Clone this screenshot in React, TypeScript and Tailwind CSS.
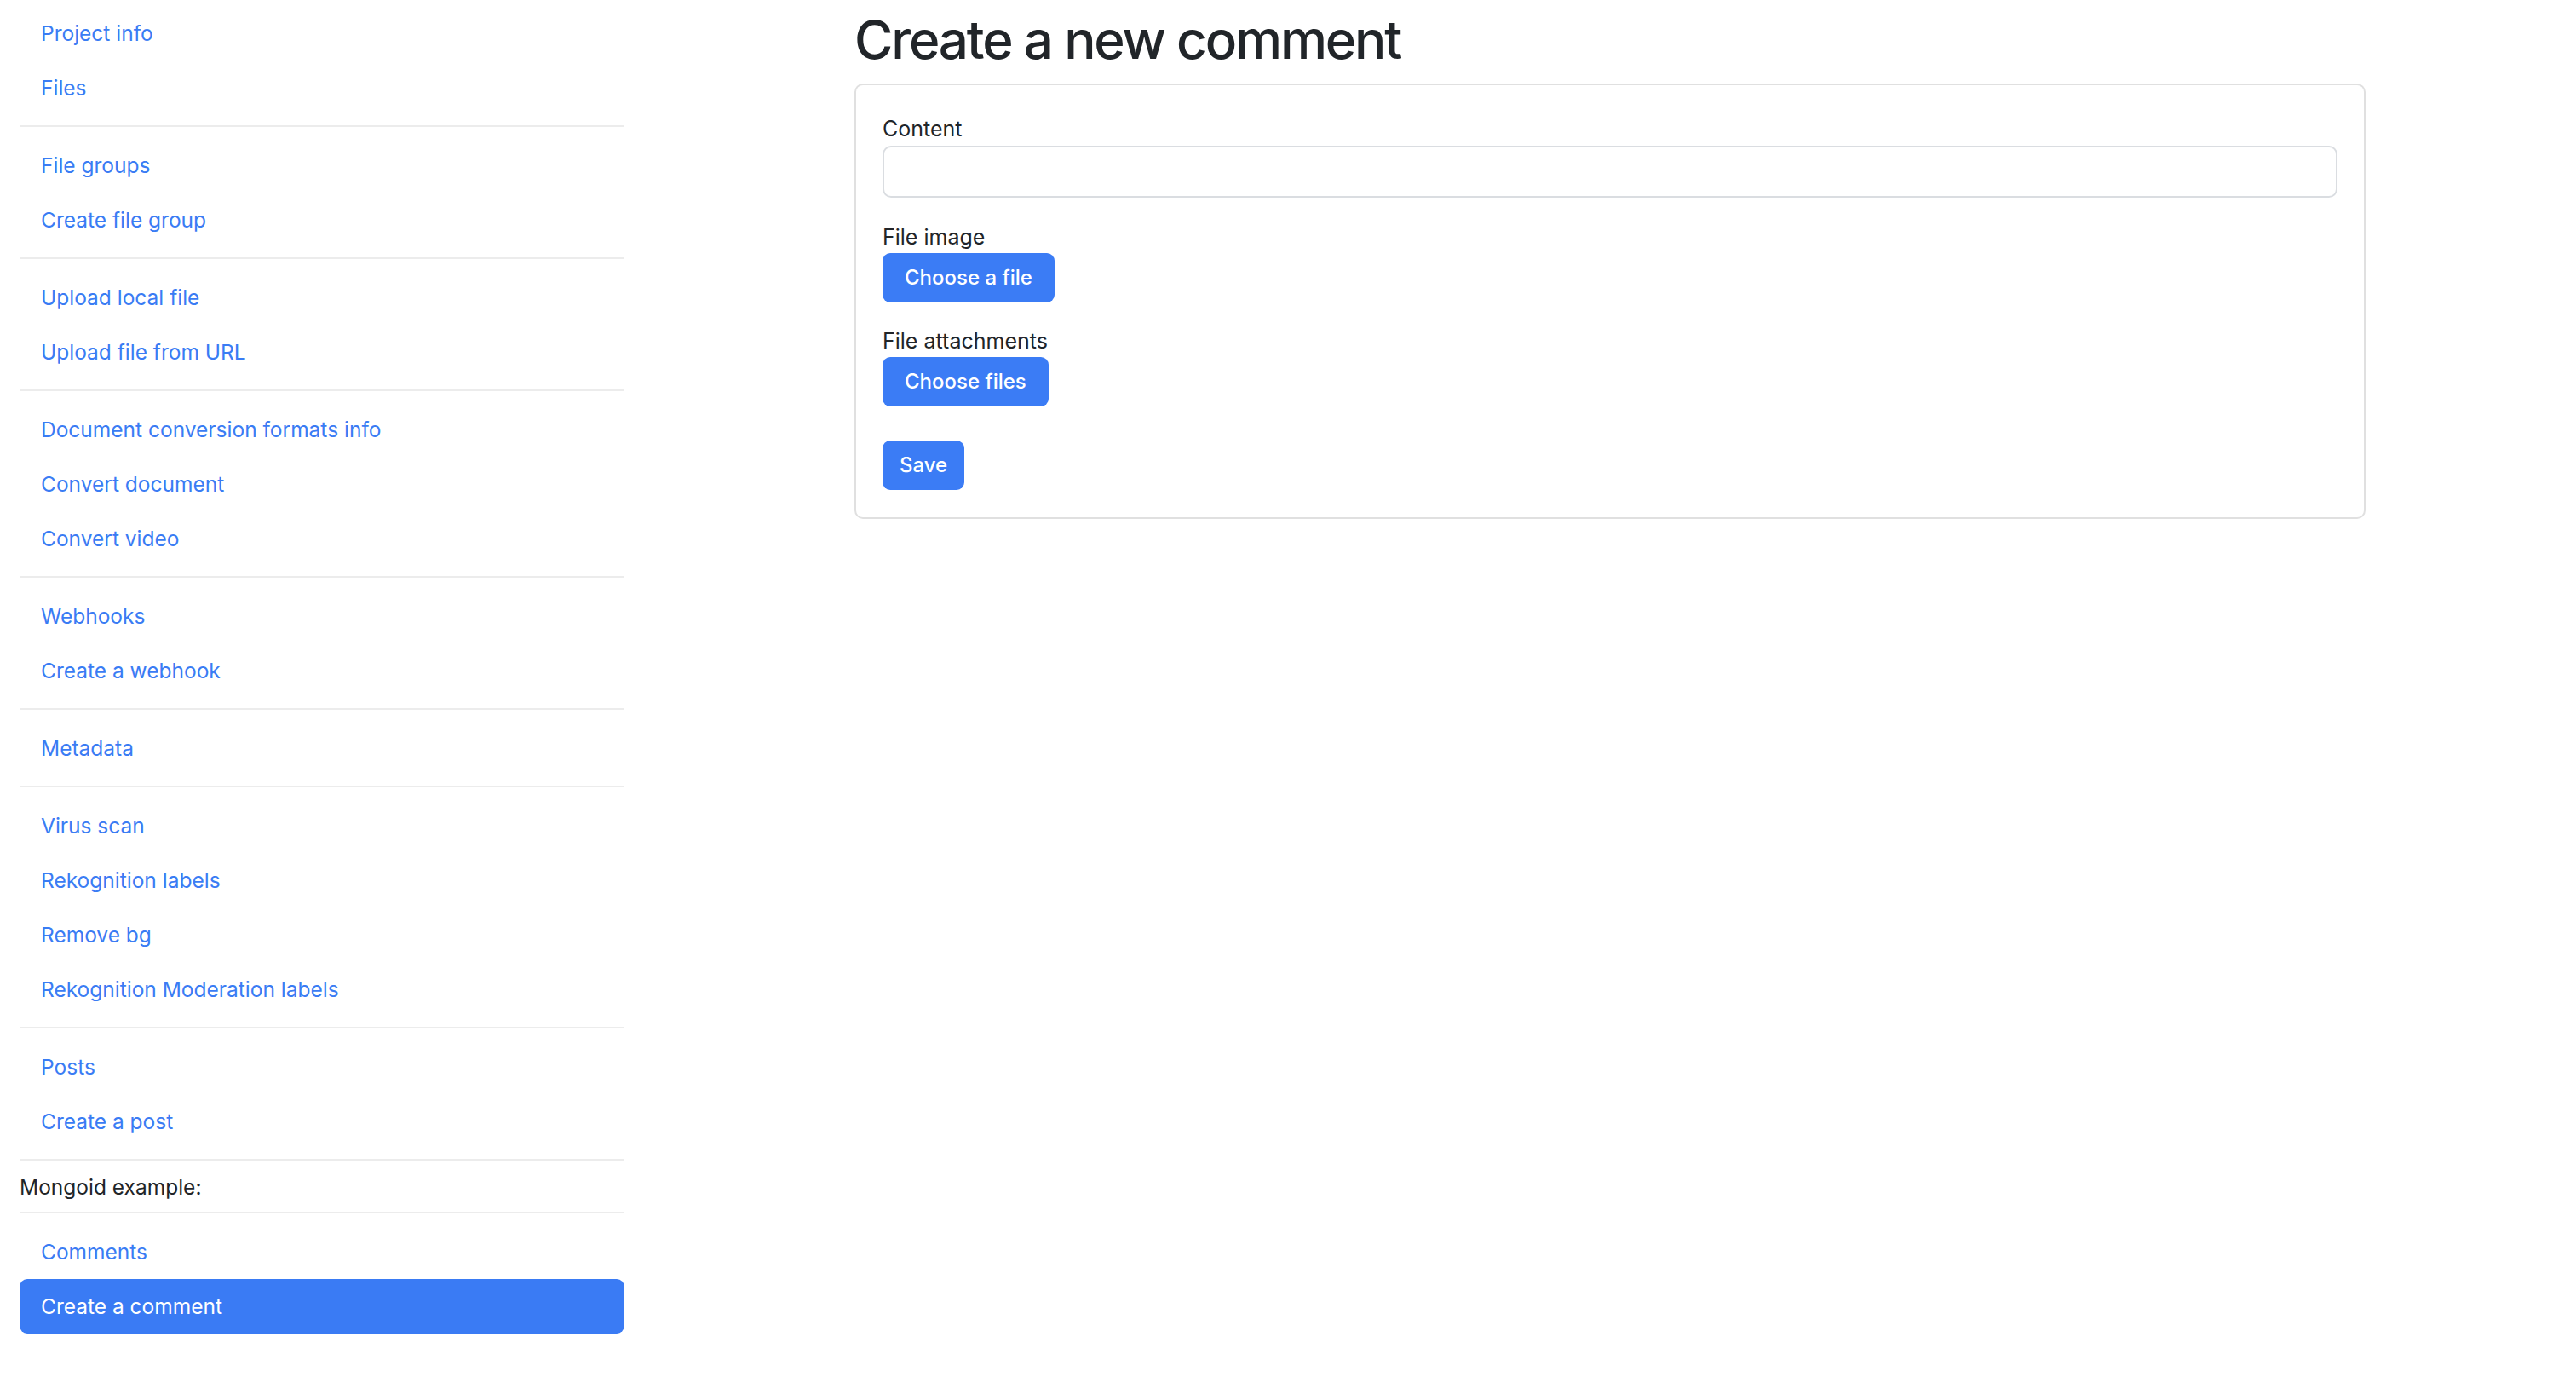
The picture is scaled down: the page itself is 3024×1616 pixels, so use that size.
const sections: (string[] | 'mongoid')[] = [
  ['Project info', 'Files'],
  ['File groups', 'Create file group'],
  ['Upload local file', 'Upload file from URL'],
  ['Document conversion formats info', 'Convert document', 'Convert video'],
  ['Webhooks', 'Create a webhook'],
  ['Metadata'],
  ['Virus scan', 'Rekognition labels', 'Remove bg', 'Rekognition Moderation labels'],
  ['Posts', 'Create a post'],
  'mongoid',
  ['Comments', 'Create a comment'],
]

const ACTIVE = 'Create a comment'

function Divider() {
  return <div className="mt-[12px] mb-[13px] h-[2px] bg-[#ececec]" />
}

function NavLink({ label }: { label: string }) {
  const active = label === ACTIVE
  return (
    <a
      href="#"
      className={
        active
          ? 'flex h-[64px] items-center rounded-[9px] bg-[#3a7bf4] pl-[25px] text-white'
          : 'flex h-[64px] items-center pl-[25px] text-[#3a7cf4]'
      }
    >
      {label}
    </a>
  )
}

function Sidebar() {
  return (
    <nav className="w-[733px] shrink-0 pl-[23px] pt-[7px] text-[24.5px] leading-[36px]">
      {sections.map((section, i) => (
        <div key={i}>
          {i > 0 && <Divider />}
          {section === 'mongoid' ? (
            <div className="h-[35px] text-[#212529]">Mongoid example:</div>
          ) : (
            section.map((label) => <NavLink key={label} label={label} />)
          )}
        </div>
      ))}
    </nav>
  )
}

function FileButton({ children, className = 'px-[26px]' }: { children: string; className?: string }) {
  return (
    <button
      type="button"
      className={`h-[58px] rounded-[9px] bg-[#3b7cf5] text-[24px] font-medium text-white ${className}`}
    >
      {children}
    </button>
  )
}

export default function App() {
  return (
    <div className="flex min-h-screen bg-white font-['Inter',sans-serif] text-[#212529]">
      <Sidebar />
      <main className="ml-[270px] w-[1774px]">
        <h1 className="pt-[10px] pb-[14px] text-[62px] font-medium leading-[74px] tracking-[-0.035em] text-[#212529]">
          Create a new comment
        </h1>
        <div className="rounded-[10px] border-2 border-[#e0e0e0] px-[31px] pt-[32px] pb-[32px]">
          <form className="flex flex-col items-start text-[25px] leading-[38px]">
            <label className="mb-[1px]">Content</label>
            <input type="text" className="h-[61px] w-full rounded-[10px] border-2 border-[#dadde1] px-[20px]" />

            <label className="mt-[27px]">File image</label>
            <FileButton>Choose a file</FileButton>

            <label className="mt-[26px]">File attachments</label>
            <FileButton>Choose files</FileButton>

            <FileButton className="mt-[40px] px-[20px]">Save</FileButton>
          </form>
        </div>
      </main>
    </div>
  )
}
